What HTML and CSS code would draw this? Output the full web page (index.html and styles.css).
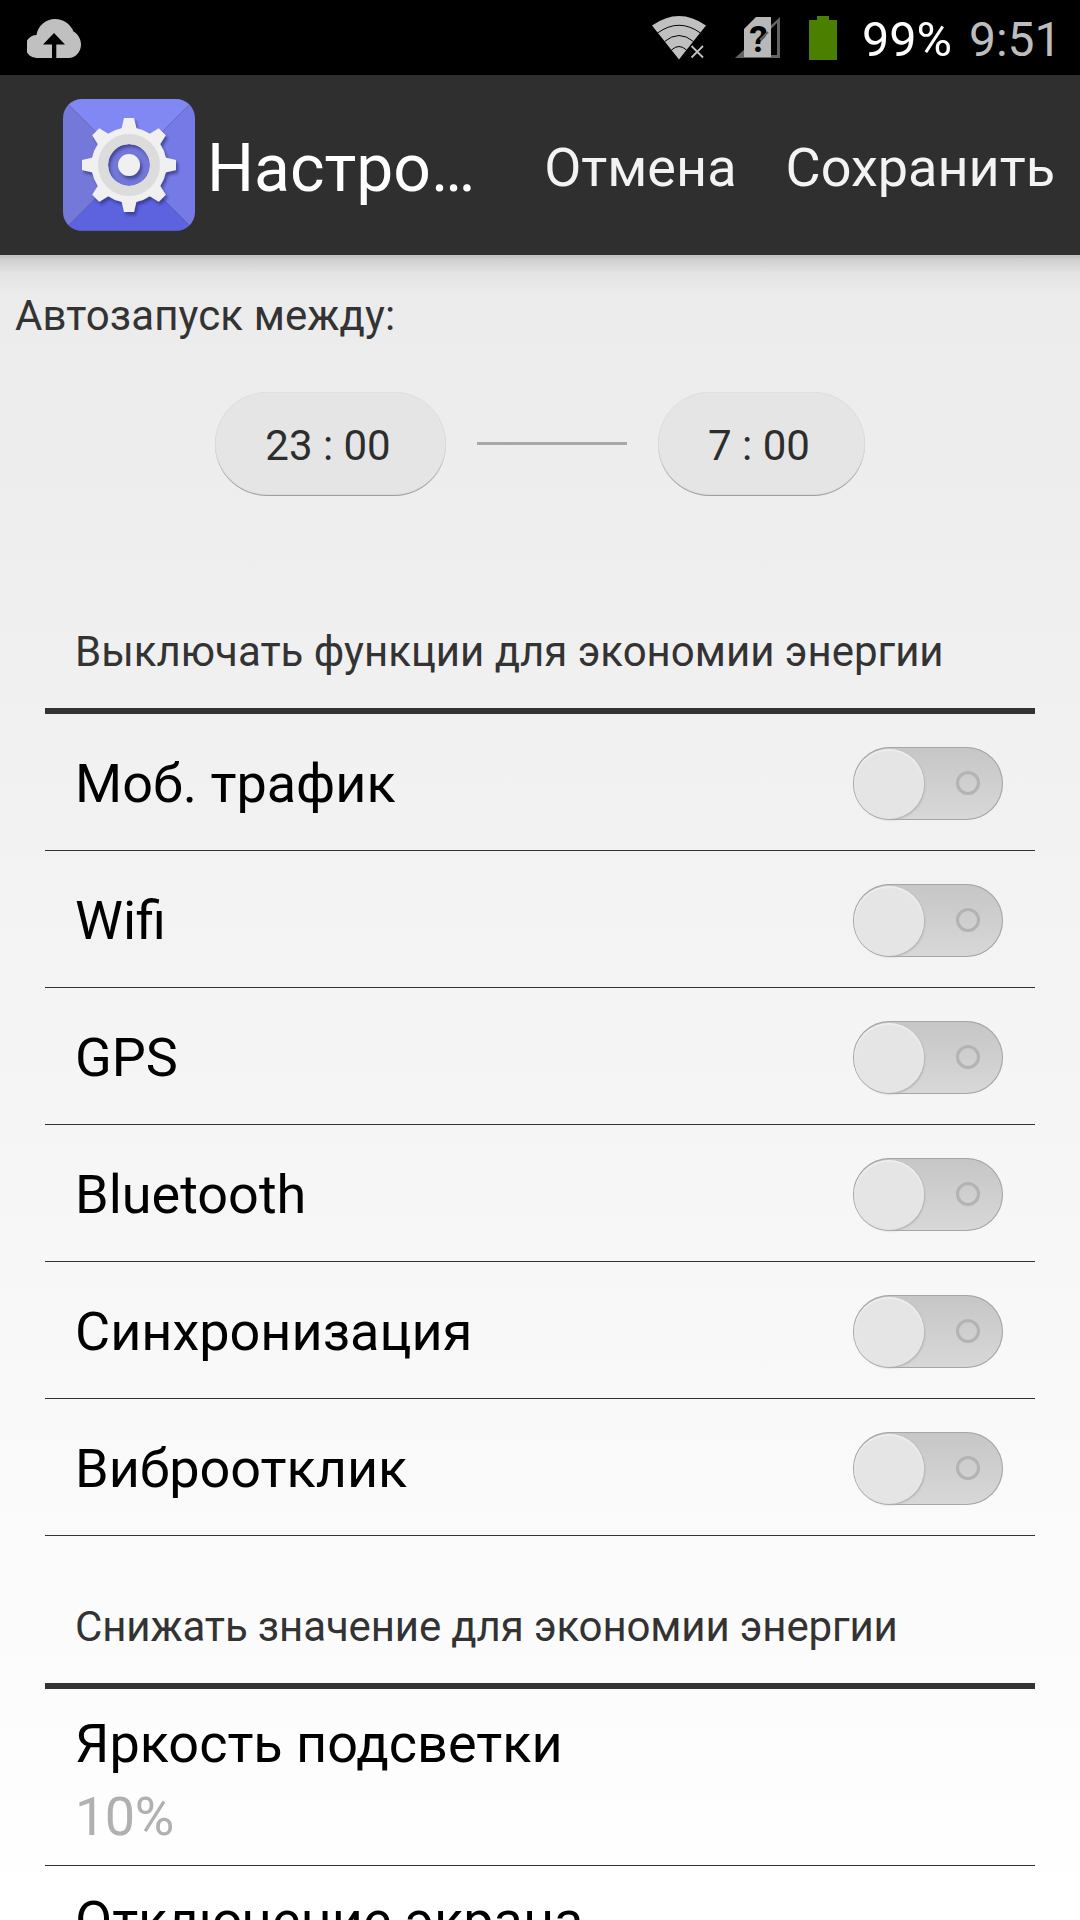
FILE: index.html
```html
<!DOCTYPE html>
<html lang="ru">
<head>
<meta charset="utf-8">
<title>Настройки</title>
<link rel="stylesheet" href="styles.css">
</head>
<body>
<div class="screen">
  <div class="statusbar">
    <svg class="cloud" width="54" height="39" viewBox="0 0 54 39"><path fill="#c0c0c0" d="M11 39A12 11.500 0 0 1 9.500 16C11 6.500 19 0 28 0c8.500 0 15.500 5 18.500 12.500C51 15 54 20 54 25.500 54 33 48.500 39 41.500 39H29.300V25.500H38L27 14 16 25.500H25V39Z"/></svg>
    <span class="spacer"></span>
    <svg class="wifi" width="55" height="44" viewBox="0 0 55 44">
      <path fill="#c0c0c0" d="M0 9.500Q27 -9.500 54 9.500L36 32 27 43.500Z"/>
      <g fill="none" stroke="#000" stroke-width="1"><path d="M5.500 17Q27 1.500 48.500 17M12.500 25.500Q27 13.500 41.500 25.500M19.500 34Q27 27 34.500 34"/></g>
      <path d="M39.500 30 51 41.500M51 30 39.500 41.500" stroke="#000" stroke-width="4.500"/>
      <path d="M39.500 30 51 41.500M51 30 39.500 41.500" stroke="#c0c0c0" stroke-width="1.800"/>
    </svg>
    <svg class="sim" width="45" height="41" viewBox="0 0 45 41">
      <path fill="#636363" d="M0 41 45 0V41Z"/><path fill="#000" d="M36 12 42 6V38H36Z"/>
      <path fill="#b8b8b8" d="M9 12 21 0H36V40H9Z"/>
      <text class="sim-mark" x="23.500" y="35" text-anchor="middle">?</text>
      <path d="M25 23 33 15" stroke="#636363" stroke-width="2"/>
    </svg>
    <svg class="battery" width="28" height="44" viewBox="0 0 28 44"><path fill="#4a7f00" d="M8 0H20V4H28V44H0V4H8Z"/></svg>
    <span class="percent">99%</span>
    <span class="clock">9:51</span>
  </div>

  <div class="actionbar">
    <svg class="app-icon" width="132" height="132" viewBox="0 0 132 132">
      <defs>
        <clipPath id="tile"><rect width="132" height="132" rx="19"/></clipPath>
        <filter id="drop" x="-20%" y="-20%" width="140%" height="140%"><feDropShadow dx="2" dy="3" stdDeviation="1.500" flood-color="#25286e" flood-opacity=".6"/></filter>
        <path id="tooth" d="M58 32 61 19H71L74 32Z"/>
      </defs>
      <g clip-path="url(#tile)">
        <path fill="#8288f3" d="M0 0H132L66 66Z"/><path fill="#757ae6" d="M132 0V132L66 66Z"/>
        <path fill="#5d63df" d="M0 132H132L66 66Z"/><path fill="#7478d8" d="M0 0V132L66 66Z"/>
        <path fill="#5359b8" d="M0 131H132V132H0Z"/>
      </g>
      <circle cx="66" cy="66" r="22" fill="#7277d8"/>
      <g filter="url(#drop)" fill="#f0f0f0">
        <use href="#tooth"/><use href="#tooth" transform="rotate(45 66 66)"/><use href="#tooth" transform="rotate(90 66 66)"/><use href="#tooth" transform="rotate(135 66 66)"/><use href="#tooth" transform="rotate(180 66 66)"/><use href="#tooth" transform="rotate(225 66 66)"/><use href="#tooth" transform="rotate(270 66 66)"/><use href="#tooth" transform="rotate(315 66 66)"/>
        <circle cx="66" cy="66" r="29.250" fill="none" stroke="#f0f0f0" stroke-width="16.500"/>
        <circle cx="66" cy="66" r="11"/>
      </g>
      <circle cx="66" cy="66" r="26" fill="none" stroke="#dcdcdc" stroke-width="10"/>
    </svg>
    <h1 class="title">Настро…</h1>
    <span class="spacer"></span>
    <span class="action cancel">Отмена</span>
    <span class="action save">Сохранить</span>
  </div>

  <div class="content">
    <div class="autorun">Автозапуск между:</div>
    <div class="times">
      <span class="pill from"><span>23 : 00</span></span>
      <span class="dash"></span>
      <span class="pill to"><span>7 : 00</span></span>
    </div>

    <div class="section">
      <h2 class="section-title">Выключать функции для экономии энергии</h2>
      <div class="row"><span>Моб. трафик</span><span class="switch"></span></div>
      <div class="row"><span>Wifi</span><span class="switch"></span></div>
      <div class="row"><span>GPS</span><span class="switch"></span></div>
      <div class="row"><span>Bluetooth</span><span class="switch"></span></div>
      <div class="row"><span>Синхронизация</span><span class="switch"></span></div>
      <div class="row"><span>Виброотклик</span><span class="switch"></span></div>
    </div>

    <div class="section">
      <h2 class="section-title lower">Снижать значение для экономии энергии</h2>
      <div class="row tall"><span>Яркость подсветки</span><span class="value">10%</span></div>
      <div class="row tall"><span>Отключение экрана</span></div>
    </div>
  </div>
</div>
</body>
</html>
```
FILE: styles.css
```css
*, *::before, *::after { box-sizing: border-box; }
body { margin: 0; }
.screen {
  width: 1080px;
  height: 1920px;
  overflow: hidden;
  display: flex;
  flex-direction: column;
  font-family: Roboto, "Noto Sans", sans-serif;
  color: #000;
  white-space: nowrap;
}
.spacer { flex: 1; }
svg { display: block; flex: none; }

/* status bar */
.statusbar {
  flex: none;
  height: 75px;
  padding: 0 26px 0 27px;
  display: flex;
  align-items: flex-start;
  background: #000;
  font-size: 48.5px;
  line-height: 75px;
}
.cloud { margin-top: 19px; }
.wifi { margin: 16px 28px 0 0; }
.sim { margin: 17px 29px 0 0; }
.sim-mark { font: bold 37px Roboto, sans-serif; fill: #000; }
.battery { margin: 16px 25px 0 0; }
.percent { padding-top: 2px; width: 87px; margin-right: 20px; color: #fff; }
.clock { padding-top: 2px; width: 85px; font-size: 48px; color: #bdbdbd; }

/* action bar */
.actionbar {
  flex: none;
  height: 180px;
  padding: 0 25px 0 63px;
  display: flex;
  align-items: center;
  background: #2f2f2f;
  color: #f3f3f3;
}
.title {
  margin: 7px 0 0 12px;
  font-size: 66px;
  font-weight: 400;
  color: #fff;
}
.action { font-size: 54px; padding-top: 5px; }
.save { margin-left: 49px; }

/* page */
.content {
  flex: 1;
  min-height: 0;
  overflow: hidden;
  background:
    linear-gradient(#c4c4c4 3px, rgba(200, 200, 200, .85) 3px, rgba(220, 220, 220, .5) 18px, rgba(235, 235, 235, 0) 40px),
    linear-gradient(#ebebeb, #fff);
}
.autorun {
  padding: 36px 0 0 15px;
  height: 137px;
  font-size: 42px;
  line-height: 50px;
  letter-spacing: 0.1px;
  color: #333;
}
.times {
  height: 105px;
  padding-left: 215px;
  display: flex;
  align-items: flex-start;
}
.pill {
  height: 104px;
  display: flex;
  align-items: center;
  justify-content: center;
  padding: 3px 5px 0 0;
  border-radius: 52px;
  background: #e5e5e5;
  box-shadow: inset 0 -1.5px 1px -0.5px #999, inset 0 0 1px #c4c4c4;
  font-size: 42px;
  color: #2d2d2d;
}
.from { width: 231px; }
.to { width: 207px; }
.dash {
  width: 150px;
  height: 3px;
  margin: 50px 31px 0;
  background: #a8a8a8;
}
.section { margin: 0 45px; }
.section-title {
  margin: 0;
  height: 217px;
  padding: 130px 0 0 30px;
  border-bottom: 6px solid #333;
  font-size: 42px;
  font-weight: 400;
  line-height: 50px;
  color: #333;
}
.lower {
  height: 153px;
  padding-top: 66px;
  letter-spacing: -0.13px;
}
.row {
  height: 137px;
  padding: 3px 32px 0 30px;
  display: flex;
  justify-content: space-between;
  align-items: center;
  border-bottom: 1px solid #333;
  font-size: 54px;
}
.tall {
  height: 177px;
  padding-top: 18px;
  flex-direction: column;
  justify-content: flex-start;
  align-items: flex-start;
  line-height: 73px;
}
.value { color: #b0b0b0; letter-spacing: -0.5px; }

/* toggle: track, knob and ring */
.switch {
  width: 150px;
  height: 73px;
  padding: 1px;
  display: flex;
  align-items: center;
  justify-content: space-between;
  border-radius: 37px;
  background: linear-gradient(#c6c6c6, #d8d8d8);
  box-shadow: inset 0 0 0 1px #a6a6a6;
}
.switch::before {
  content: "";
  width: 70px;
  height: 70px;
  border-radius: 50%;
  background: #e5e5e5;
  box-shadow: inset 0 1px 2px #f4f4f4, 1px 1px 2px #b0b0b0;
}
.switch::after {
  content: "";
  width: 24px;
  height: 24px;
  margin: -2px 22px 0 0;
  border: 3px solid #b3b3b3;
  border-radius: 50%;
}
```
